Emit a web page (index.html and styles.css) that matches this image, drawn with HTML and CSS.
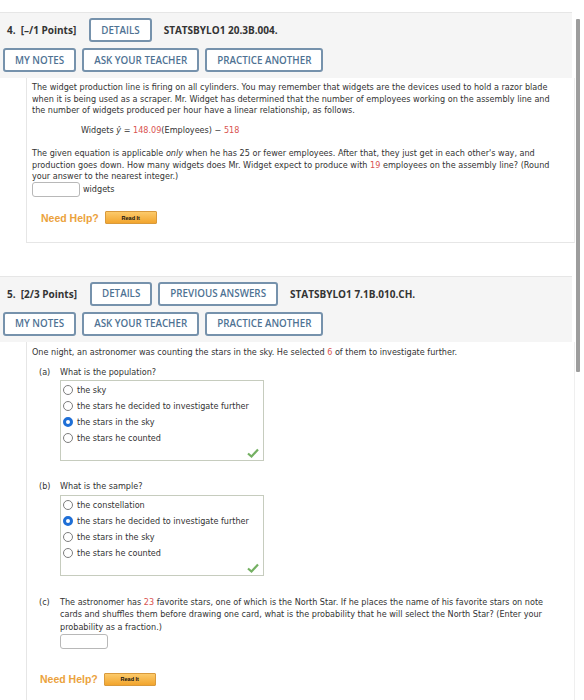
FILE: index.html
```html
<!DOCTYPE html>
<html lang="en">

<head>
	<meta charset="UTF-8" />
	<meta name="viewport" content="width=device-width, initial-scale=1.0" />
	<title>Assignment</title>
	<link rel="stylesheet" href="styles.css">
</head>

<body>
	<div class="page">
		<div class="main">
			<section class="question">
				<header class="q-head">
					<div class="head-row">
						<span class="q-num">4.&nbsp; [–/1 Points]</span>
						<button class="btn">DETAILS</button>
						<span class="q-code">STATSBYLO1 20.3B.004.</span>
					</div>
					<div class="head-row">
						<button class="btn">MY NOTES</button>
						<button class="btn">ASK YOUR TEACHER</button>
						<button class="btn">PRACTICE ANOTHER</button>
					</div>
				</header>
				<div class="q-body">
					<p class="text">The widget production line is firing on all cylinders. You may remember that widgets are the devices used to hold a razor blade when it is being used as a scraper. Mr. Widget has determined that the number of employees working on the assembly line and the number of widgets produced per hour have a linear relationship, as follows.</p>
					<p class="formula">Widgets <i>ŷ</i> = <span class="red">148.09</span>(Employees) − <span class="red">518</span></p>
					<p class="text spaced">The given equation is applicable <i>only</i> when he has 25 or fewer employees. After that, they just get in each other's way, and production goes down. How many widgets does Mr. Widget expect to produce with <span class="red">19</span> employees on the assembly line? (Round your answer to the nearest integer.)</p>
					<div class="answer">
						<input class="blank" type="text" />
						<span>widgets</span>
					</div>
					<div class="help">
						<span class="help-label">Need Help?</span>
						<button class="read-it">Read It</button>
					</div>
				</div>
			</section>

			<section class="question">
				<header class="q-head">
					<div class="head-row">
						<span class="q-num">5.&nbsp; [2/3 Points]</span>
						<button class="btn">DETAILS</button>
						<button class="btn">PREVIOUS ANSWERS</button>
						<span class="q-code">STATSBYLO1 7.1B.010.CH.</span>
					</div>
					<div class="head-row">
						<button class="btn">MY NOTES</button>
						<button class="btn">ASK YOUR TEACHER</button>
						<button class="btn">PRACTICE ANOTHER</button>
					</div>
				</header>
				<div class="q-body open">
					<p class="text">One night, an astronomer was counting the stars in the sky. He selected <span class="red">6</span> of them to investigate further.</p>

					<div class="part">
						<span class="part-label">(a)</span>
						<div class="part-main">
							<p class="text">What is the population?</p>
							<div class="choices">
								<label class="choice"><input class="radio" type="radio" name="pop" />the sky</label>
								<label class="choice"><input class="radio" type="radio" name="pop" />the stars he decided to investigate further</label>
								<label class="choice"><input class="radio" type="radio" name="pop" checked />the stars in the sky</label>
								<label class="choice"><input class="radio" type="radio" name="pop" />the stars he counted</label>
								<div class="mark">
									<svg width="12" height="10" viewBox="0 0 12 10"><polyline points="1,5.5 4.5,8.5 11,1.5" fill="none" stroke="#74b062" stroke-width="2.2" /></svg>
								</div>
							</div>
						</div>
					</div>

					<div class="part">
						<span class="part-label">(b)</span>
						<div class="part-main">
							<p class="text">What is the sample?</p>
							<div class="choices">
								<label class="choice"><input class="radio" type="radio" name="sample" />the constellation</label>
								<label class="choice"><input class="radio" type="radio" name="sample" checked />the stars he decided to investigate further</label>
								<label class="choice"><input class="radio" type="radio" name="sample" />the stars in the sky</label>
								<label class="choice"><input class="radio" type="radio" name="sample" />the stars he counted</label>
								<div class="mark">
									<svg width="12" height="10" viewBox="0 0 12 10"><polyline points="1,5.5 4.5,8.5 11,1.5" fill="none" stroke="#74b062" stroke-width="2.2" /></svg>
								</div>
							</div>
						</div>
					</div>

					<div class="part last">
						<span class="part-label">(c)</span>
						<div class="part-main">
							<p class="text loose">The astronomer has <span class="red">23</span> favorite stars, one of which is the North Star. If he places the name of his favorite stars on note cards and shuffles them before drawing one card, what is the probability that he will select the North Star? (Enter your probability as a fraction.)</p>
							<input class="blank" type="text" />
						</div>
					</div>

					<div class="help low">
						<span class="help-label">Need Help?</span>
						<button class="read-it">Read It</button>
					</div>
				</div>
			</section>
		</div>
		<div class="scrollbar">
			<div class="thumb"></div>
		</div>
	</div>
</body>

</html>
```

FILE: styles.css
```css
body {
	margin: 0;
	background-color: #fff;
	color: #333;
	font-family: "DejaVu Sans", Verdana, sans-serif;
}

.page {
	display: flex;
}

.main {
	width: 575px;
	padding-top: 12px;
}

.question {
	margin-bottom: 33px;
}

/* header with points and the action buttons */
.q-head {
	display: flex;
	flex-direction: column;
	gap: 6px;
	margin-right: 3px;
	padding: 5px 3px 6px;
	background-color: #f5f5f5;
	border-top: 1px solid #e6e6e6;
	font-family: "Open Sans", sans-serif;
}

.head-row {
	display: flex;
	align-items: center;
	gap: 6px;
}

.q-num {
	margin: 0 7px 0 4px;
	font-size: 10px;
	font-weight: 700;
	color: #333;
}

.q-code {
	margin-left: 6px;
	font-size: 10px;
	font-weight: 700;
	color: #333;
}

.btn {
	box-sizing: border-box;
	height: 24px;
	padding: 0 10px;
	background-color: #fff;
	border: 2px solid #7692ac;
	border-radius: 3px;
	color: #4e7293;
	font-family: "Open Sans", sans-serif;
	font-size: 9.8px;
	font-weight: 600;
}

/* question body */
.q-body {
	margin-left: 26px;
	padding: 4px 16px 17px 5px;
	border-left: 1px solid #e6e6e6;
	border-right: 1px solid #efefef;
	border-bottom: 1px solid #e6e6e6;
	font-size: 8.1px;
}

.q-body.open {
	padding-top: 5px;
	padding-bottom: 30px;
	border-bottom: none;
}

.text {
	margin: 0;
	line-height: 11.5px;
}

.text.spaced {
	margin-top: 11.5px;
}

.text.loose {
	line-height: 12.5px;
}

.formula {
	margin: 8.5px 0 0;
	padding-left: 49px;
	line-height: 11.5px;
}

.red {
	color: #d9534f;
}

.answer {
	display: flex;
	align-items: center;
	gap: 3px;
	margin-top: -1px;
}

.blank {
	box-sizing: border-box;
	width: 48px;
	height: 15px;
	margin: 0;
	border: 1px solid #b8b8b8;
	border-radius: 3px;
	background-color: #fff;
}

.help {
	display: flex;
	align-items: center;
	gap: 6px;
	height: 14px;
	margin: 14px 0 0 9px;
}

.help.low {
	margin-top: 23px;
	margin-left: 8px;
}

.help-label {
	font-family: "Liberation Sans", Arial, sans-serif;
	font-size: 10.5px;
	font-weight: 700;
	color: #eba23c;
}

.read-it {
	box-sizing: border-box;
	width: 52px;
	height: 13px;
	padding: 0;
	background: linear-gradient(#fcca6a, #f2a52e);
	border: 1px solid #d99a3c;
	border-radius: 1px;
	color: #111;
	font-family: "Liberation Sans", Arial, sans-serif;
	font-size: 5.5px;
	font-weight: 700;
}

/* multi part question */
.part {
	display: flex;
	margin: 8.5px 0 0 7px;
}

.part + .part {
	margin-top: 20px;
}

.part-label {
	flex-shrink: 0;
	width: 21px;
	line-height: 11.5px;
}

.part.last .part-label {
	line-height: 12.5px;
}

.part-main .blank {
	display: block;
	margin-top: 1px;
}

.choices {
	width: 201px;
	margin-top: 2px;
	padding: 1px 0 0 1px;
	border: 1px solid #c6ccbe;
}

.choice {
	display: flex;
	align-items: center;
	height: 16px;
}

.radio {
	appearance: none;
	box-sizing: border-box;
	width: 10px;
	height: 10px;
	margin: 0 4px 0 1px;
	background-color: #fff;
	border: 1px solid #7d7d7d;
	border-radius: 50%;
}

.radio:checked {
	border: 3px solid #1f6fd6;
}

.mark {
	display: flex;
	justify-content: flex-end;
	align-items: center;
	height: 14px;
	padding-right: 4px;
}

/* fake page scrollbar */
.scrollbar {
	width: 9px;
	padding-top: 19px;
}

.thumb {
	width: 4px;
	height: 353px;
	margin-left: 1px;
	background-color: #9d9d9d;
	border-radius: 1px;
}
```
